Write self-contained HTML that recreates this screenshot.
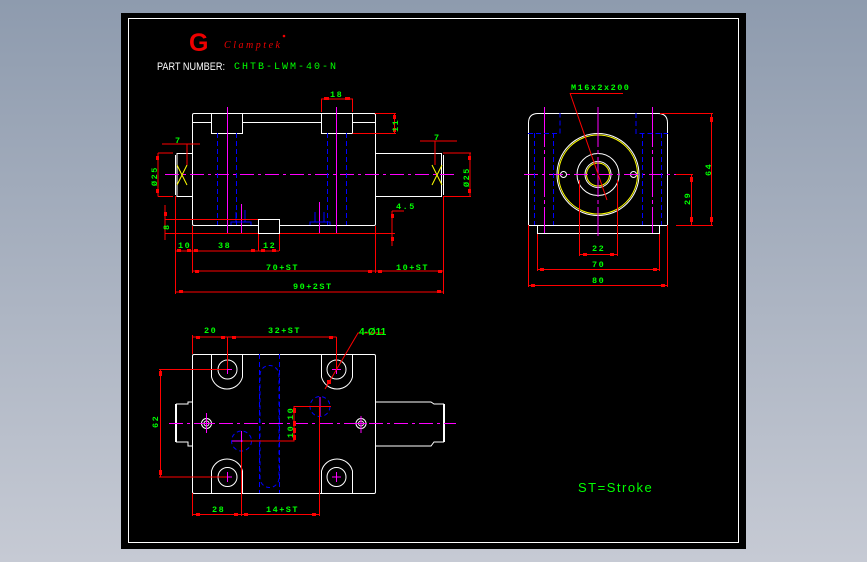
<!DOCTYPE html>
<html><head><meta charset="utf-8"><style>
html,body{margin:0;padding:0;width:867px;height:562px;overflow:hidden;background:linear-gradient(#8e9bae,#c6cad4);}
svg{position:absolute;left:0;top:0}
text{font-family:"Liberation Mono",monospace;fill:#00ff00}
</style></head><body>
<svg width="867" height="562" viewBox="0 0 867 562">
<rect x="121" y="13" width="625" height="536" fill="#000"/>
<rect x="128.5" y="18.5" width="610" height="524" fill="none" stroke="#fff" stroke-width="1"/>
<!-- logo -->
<text x="189" y="51" style="font-family:'Liberation Sans',sans-serif;font-weight:bold;font-size:25px;fill:#e00">G</text>
<text x="224" y="48" textLength="56" style="font-family:'Liberation Serif',serif;font-style:italic;font-size:10px;fill:#e00">Clamptek</text>
<circle cx="284" cy="36" r="1.3" fill="#e00"/>
<text x="157" y="70" textLength="68" lengthAdjust="spacingAndGlyphs" style="font-family:'Liberation Sans',sans-serif;font-size:11px;fill:#fff">PART NUMBER:</text>
<text x="234" y="69" textLength="102" style="font-size:10px">CHTB-LWM-40-N</text>

<g fill="none" stroke-width="1">
<!-- TOP VIEW -->
<g stroke="#fff">
<path d="M194 113.5H374Q375.5 113.5 375.5 115V224Q375.5 225.5 374 225.5H279.5M258.5 225.5H194Q192.5 225.5 192.5 224V115Q192.5 113.5 194 113.5"/>
<path d="M192.5 122.5H211.5M242.5 122.5H321.5M352.5 122.5H375.5"/>
<path d="M211.5 113.5V133.5H242.5V113.5M321.5 113.5V133.5H352.5V113.5"/>
<path d="M258.5 219.5H279.5V233.5H258.5Z"/>
<path d="M375.5 153.5H441.5V196.5H375.5M192.5 153.5H177V196.5H192.5"/>
<path d="M175.5 155V195M443.5 155V195"/>
</g>
<path d="M177 165L187 185M187 165L177 185M432 165L442 185M442 165L432 185" stroke="#ff0"/>
<path d="M165 174.5H456" stroke="#f0f" stroke-dasharray="14 4 3 4"/>
<path d="M227.5 107V233M336.5 107V233M241.5 204V233M319.5 202V233" stroke="#f0f"/>
<path d="M217.5 133V225M236.5 133V225M327.5 133V225M346.5 133V225" stroke="#00f" stroke-dasharray="5 3"/>
<path d="M231 225V222H251V225M236 222V212M245 222V210M310 225V222H330V225M315 222V212M324 222V212" stroke="#00f"/>
<g stroke="#f00">
<path d="M321.5 112V99H352.5V112M352.5 133.5H396M375 113.5H396M394.5 113.5V133.5"/>
<path d="M162 144H200M187 144V165M173 153H158M173 196.5H158M158 153V196.5"/>
<path d="M420 141H457M435 141V165M443 153H471M443 196.5H471M470 153V196.5"/>
<path d="M165 205V240M165 219.5H258M165 233.5H258M280 233.5H395M392 211V246M392 211H404"/>
<path d="M175.5 196V294M192.5 226V273M258.5 234V251M279.5 234V251M375.5 226V273M443.5 196V294"/>
<path d="M176 251H279M192.5 271H443M176 292H443"/>
</g>
<g fill="#f00" stroke="none">
<rect x="324" y="97" width="5" height="3"/><rect x="345" y="97" width="5" height="3"/>
<rect x="393" y="115" width="3" height="4"/><rect x="393" y="128" width="3" height="4"/>
<rect x="156" y="156" width="3" height="4"/><rect x="156" y="189" width="3" height="4"/>
<rect x="468" y="156" width="3" height="4"/><rect x="468" y="189" width="3" height="4"/>
<rect x="177" y="249" width="4" height="3"/><rect x="187" y="249" width="4" height="3"/><rect x="194" y="249" width="4" height="3"/><rect x="251" y="249" width="4" height="3"/><rect x="261" y="249" width="4" height="3"/><rect x="272" y="249" width="4" height="3"/>
<rect x="195" y="270" width="4" height="3"/><rect x="368" y="270" width="4" height="3"/><rect x="378" y="270" width="4" height="3"/><rect x="438" y="270" width="4" height="3"/>
<rect x="179" y="290" width="4" height="3"/><rect x="437" y="290" width="4" height="3"/>
<rect x="164" y="212" width="3" height="4"/><rect x="391" y="214" width="3" height="4"/><rect x="391" y="237" width="3" height="4"/>
</g>

<!-- SIDE VIEW -->
<g stroke="#fff">
<path d="M528.5 225.5V123Q528.5 113.5 538 113.5H658Q667.5 113.5 667.5 123V225.5Z"/>
<path d="M537.5 225.5V233.5H659.5V225.5"/>
<circle cx="598" cy="174.5" r="41"/>
<circle cx="598" cy="174.5" r="21"/>
<circle cx="598" cy="174.5" r="13"/>
<circle cx="563.5" cy="174.5" r="3"/><circle cx="633.5" cy="174.5" r="3"/>
</g>
<circle cx="598" cy="174.5" r="39.5" stroke="#ff0"/>
<circle cx="598" cy="174.5" r="11.5" stroke="#ff0"/>
<path d="M524 174.5H676" stroke="#f0f" stroke-dasharray="14 4 3 4"/>
<path d="M544.5 107V233M598 107V236M652.5 107V233" stroke="#f0f" stroke-dasharray="40 3 4 3"/>
<path d="M534.5 133V225M553.5 133V225M642.5 133V225M661.5 133V225M528 133.5H560V113M636 113V133.5H668" stroke="#00f" stroke-dasharray="5 3"/>
<g stroke="#f00">
<path d="M570 93.5H623M570 93L607 200"/>
<path d="M660 113.5H713M676 225.5H713M711.5 113.5V225.5M676 174.5H693M691.5 174.5V225.5"/>
<path d="M579.5 180V256M617.5 180V256M579.5 254.5H617.5M537.5 234V271M659.5 234V271M537.5 269.5H659.5M528.5 225V287M667.5 225V287M528.5 285.5H667.5"/>
</g>
<g fill="#f00" stroke="none">
<rect x="710" y="117" width="3" height="5"/><rect x="710" y="217" width="3" height="5"/>
<rect x="690" y="177" width="3" height="5"/><rect x="690" y="217" width="3" height="5"/>
<rect x="583" y="253" width="4" height="3"/><rect x="610" y="253" width="4" height="3"/>
<rect x="540" y="268" width="4" height="3"/><rect x="653" y="268" width="4" height="3"/>
<rect x="531" y="284" width="4" height="3"/><rect x="661" y="284" width="4" height="3"/>
</g>

<!-- BOTTOM VIEW -->
<g stroke="#fff">
<path d="M194 354.5H374Q375.5 354.5 375.5 356V492Q375.5 493.5 374 493.5H194Q192.5 493.5 192.5 492V356Q192.5 354.5 194 354.5Z"/>
<path d="M211.5 354.5V377A16 16 0 0 0 242.5 377V354.5M321.5 354.5V377A16 16 0 0 0 352.5 377V354.5"/>
<path d="M211.5 493.5V471A16 16 0 0 1 242.5 471V493.5M321.5 493.5V471A16 16 0 0 1 352.5 471V493.5"/>
<circle cx="227.5" cy="369.5" r="9.5"/><circle cx="336.5" cy="369.5" r="9.5"/>
<circle cx="227.5" cy="477" r="9.5"/><circle cx="336.5" cy="477" r="9.5"/>
<path d="M192.5 402H188V404H176.5V442H188V446H192.5M175.5 404V442M375.5 402H431L434 404H443.5V442H434L431 446H375.5M444.5 404V442"/>
<circle cx="206.5" cy="423.5" r="5"/><circle cx="206.5" cy="423.5" r="2.5"/>
<circle cx="361" cy="423.5" r="5"/><circle cx="361" cy="423.5" r="2.5"/>
</g>
<path d="M259.5 354V493M279.5 354V493" stroke="#00f" stroke-dasharray="5 3"/>
<path d="M260 375A9.5 9.5 0 0 1 279 375V478A9.5 9.5 0 0 1 260 478Z" stroke="#00f" stroke-dasharray="4 3"/>
<circle cx="320" cy="406.5" r="10" stroke="#00f" stroke-dasharray="4 3"/>
<circle cx="241.5" cy="441" r="10" stroke="#00f" stroke-dasharray="4 3"/>
<path d="M169 423.5H456" stroke="#f0f" stroke-dasharray="14 4 3 4"/>
<path d="M223 369.5H232M227.5 365V374M332 369.5H341M336.5 365V374M223 477H232M227.5 472V482M332 477H341M336.5 472V482M200 423.5H213M206.5 413V433M355 423.5H367M361 416V433M241.5 431V451M232 441H251M320 397V416" stroke="#f0f"/>
<g stroke="#f00">
<path d="M192.5 337H336.5M192.5 335V354M227.5 337V369M336.5 337V369"/>
<path d="M159 369.5H227M159 477H227M160.5 369.5V477"/>
<path d="M320 406.5H294V441H243M294 406.5V441M320 406.5H331"/>
<path d="M192.5 493V516M241.5 442V516M319.5 406V516M192.5 514.5H319.5"/>
<path d="M325 389L358 333H384"/>
</g>
<g fill="#f00" stroke="none">
<rect x="196" y="336" width="4" height="3"/><rect x="221" y="336" width="4" height="3"/><rect x="232" y="336" width="4" height="3"/><rect x="329" y="336" width="4" height="3"/>
<rect x="159" y="371" width="3" height="5"/><rect x="159" y="470" width="3" height="5"/>
<rect x="293" y="408" width="3" height="5"/><rect x="293" y="421" width="3" height="5"/><rect x="293" y="428" width="3" height="5"/><rect x="293" y="435" width="3" height="5"/>
<rect x="196" y="513" width="4" height="3"/><rect x="234" y="513" width="4" height="3"/><rect x="244" y="513" width="4" height="3"/><rect x="312" y="513" width="4" height="3"/>
<rect x="327" y="380" width="4" height="4"/>
</g>
</g>

<!-- dimension text -->
<g style="font-size:8.5px;letter-spacing:1.5px;font-weight:bold">
<text x="330" y="97">18</text>
<text x="175" y="143">7</text>
<text x="434" y="140">7</text>
<text x="396" y="209">4.5</text>
<text x="178" y="248">10</text>
<text x="218" y="248">38</text>
<text x="263" y="248">12</text>
<text x="266" y="270">70+ST</text>
<text x="396" y="270">10+ST</text>
<text x="293" y="289">90+2ST</text>
<text x="571" y="90">M16x2x200</text>
<text x="592" y="251">22</text>
<text x="592" y="267">70</text>
<text x="592" y="283">80</text>
<text x="204" y="333">20</text>
<text x="268" y="333">32+ST</text>
<text x="212" y="512">28</text>
<text x="266" y="512">14+ST</text>
</g>
<g style="font-size:8.5px;letter-spacing:1.5px;font-weight:bold">
<text transform="translate(398,132) rotate(-90)">11</text>
<text transform="translate(157,186) rotate(-90)">Ø25</text>
<text transform="translate(469,187) rotate(-90)">Ø25</text>
<text transform="translate(169,230) rotate(-90)">8</text>
<text transform="translate(711,176) rotate(-90)">64</text>
<text transform="translate(690,205) rotate(-90)">29</text>
<text transform="translate(158,428) rotate(-90)">62</text>
<text transform="translate(293,420) rotate(-90)">10</text>
<text transform="translate(293,438) rotate(-90)">10</text>
</g>
<text x="359" y="335" style="font-family:'Liberation Sans',sans-serif;font-size:10px;font-weight:bold">4-Ø11</text>
<text x="578" y="492" style="font-family:'Liberation Sans',sans-serif;font-size:13px;letter-spacing:1.5px">ST=Stroke</text>
</svg>
</body></html>
